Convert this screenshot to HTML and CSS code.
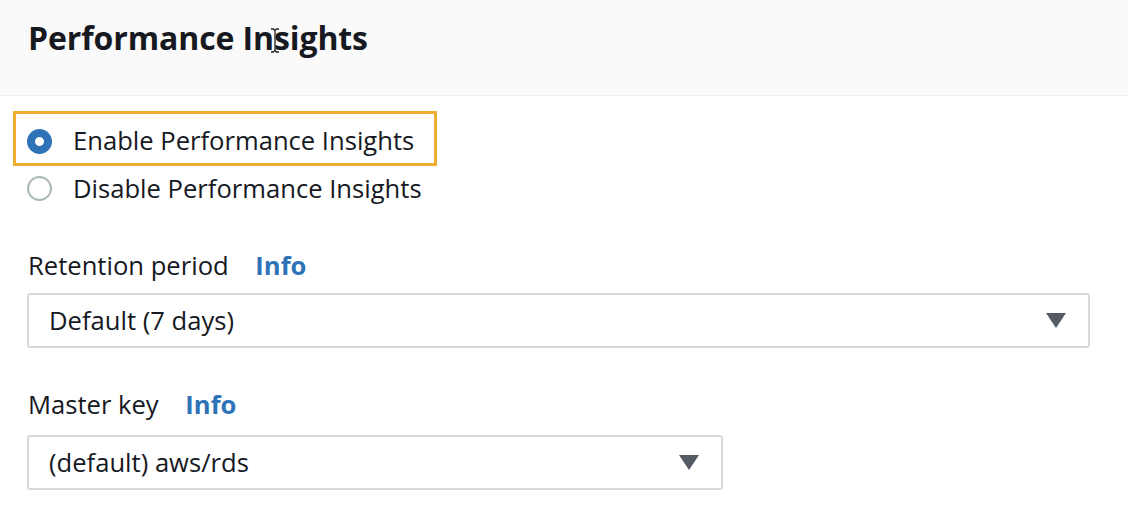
FILE: index.html
```html
<!DOCTYPE html>
<html>
<head>
<meta charset="utf-8">
<link rel="stylesheet" href="styles.css">
</head>
<body>
<div class="panel">
  <div class="header">
    <h2 class="title">Performance Insights</h2>
    <svg class="cursor" width="10" height="25" viewBox="0 0 10 25">
      <path d="M1 1h2.5l1.5 1.5L6.5 1H9M5 2.5v20M1 24h2.5l1.5-1.5L6.5 24H9" fill="none" stroke="#222" stroke-width="1.3"/>
    </svg>
  </div>
  <div class="body">
    <div class="radios">
      <label class="radio highlighted">
        <span class="dot checked"></span>
        <span class="rlabel">Enable Performance Insights</span>
      </label>
      <label class="radio second">
        <span class="dot"></span>
        <span class="rlabel">Disable Performance Insights</span>
      </label>
    </div>
    <div class="field first">
      <div class="flabel">Retention period <a class="info">Info</a></div>
      <div class="select wide">
        <span>Default (7 days)</span>
        <span class="caret"></span>
      </div>
    </div>
    <div class="field last">
      <div class="flabel">Master key <a class="info">Info</a></div>
      <div class="select narrow">
        <span>(default) aws/rds</span>
        <span class="caret"></span>
      </div>
    </div>
  </div>
</div>
</body>
</html>
```
FILE: styles.css
```css
* { box-sizing: border-box; }
html, body { margin: 0; padding: 0; background: #fff; }
body {
  font-family: "Open Sans", "Noto Sans", sans-serif;
  color: #16191f;
  width: 1128px;
  height: 516px;
  overflow: hidden;
}
.header {
  position: relative;
  background: #fafafa;
  height: 96px;
  border-bottom: 1px solid #eaeded;
  padding: 18px 28px 0;
}
.title {
  margin: 0;
  font-size: 32px;
  font-weight: 700;
  line-height: 40px;
  letter-spacing: -0.1px;
}
.cursor {
  position: absolute;
  left: 270px;
  top: 28px;
}
.body {
  padding: 15px 38px 0 27px;
}
.radios {
  display: flex;
  flex-direction: column;
}
.radio {
  display: flex;
  align-items: center;
  gap: 21px;
  font-size: 25.6px;
  line-height: 30px;
}
.radio.highlighted {
  margin-left: -14px;
  padding: 5px 0 0 11px;
  width: 424px;
  height: 55px;
  border: 3px solid #efad33;
}
.radio.second { height: 45px; }
.dot {
  width: 25px;
  height: 25px;
  border-radius: 50%;
  border: 2px solid #aab7b8;
  background: #fff;
  flex: none;
}
.dot.checked {
  border: 8px solid #2e73b8;
}
.field {
  margin-top: 42px;
}
.field.first { margin-top: 40px; }
.flabel {
  font-size: 25.6px;
  line-height: 30px;
  margin-left: 1px;
}
.info {
  color: #2e73b8;
  font-weight: 700;
  margin-left: 20px;
}
.select {
  margin-top: 12px;
  height: 55px;
  border: 2px solid #d5dbdb;
  border-radius: 3px;
  display: flex;
  align-items: center;
  justify-content: space-between;
  padding: 0 22px 0 20px;
  font-size: 25.6px;
}
.field.last .select { margin-top: 15px; }
.select.wide { width: 1063px; }
.select.narrow { width: 696px; }
.caret {
  width: 0;
  height: 0;
  border-left: 10px solid transparent;
  border-right: 10px solid transparent;
  border-top: 15px solid #545b64;
}
```
